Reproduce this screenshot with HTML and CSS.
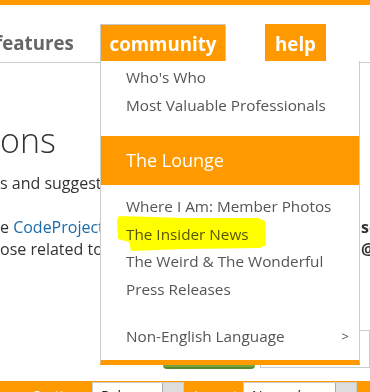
FILE: index.html
```html
<!DOCTYPE html>
<html>
<head>
<meta charset="utf-8">
<link rel="stylesheet" href="styles.css">
</head>
<body>
<div class="topbar"></div>
<nav class="nav">
  <span class="nav-item plain">features</span>
  <span class="nav-item tab active">community</span>
  <span class="nav-item tab help">help</span>
</nav>
<main class="page">
  <h1 class="title">ons</h1>
  <p class="intro">s and suggestions for the site and its features</p>
  <div class="para">
    <div class="line"><span class="head">e <a class="link">CodeProject</a> forums are open to all members</span><b class="tail">se</b></div>
    <div class="line"><span class="head">ose related to the site and its features</span><span class="tail">@</span></div>
  </div>
  <div class="actions">
    <span class="btn-green"></span>
    <span class="search">sa</span>
  </div>
</main>
<div class="sortbar">
  <span class="sort-label">Sorting</span>
  <span class="select s1"><span class="sel-text">Relevance</span><span class="sel-btn"></span></span>
  <span class="sort-label l2">Layout</span>
  <span class="select s2"><span class="sel-text">Normal</span><span class="sel-btn"></span></span>
</div>
<div class="dropdown">
  <ul class="menu first">
    <li>Who's Who</li>
    <li>Most Valuable Professionals</li>
  </ul>
  <div class="band">The Lounge</div>
  <ul class="menu second">
    <li>Where I Am: Member Photos</li>
    <li>The Insider News</li>
    <li>The Weird &amp; The Wonderful</li>
    <li>Press Releases</li>
    <li class="sub">Non-English Language <span class="arrow">&gt;</span></li>
  </ul>
</div>
<svg class="marker" width="154" height="40" viewBox="115 213 154 40">
  <polygon fill="#ffff00" points="119,216 185,218 258,218 265,221 266,245 260,248 185,249 131,251 129,242 118,239 117,220"/>
</svg>
</body>
</html>
```

FILE: styles.css
```css
html, body {
  margin: 0;
  padding: 0;
}
body {
  width: 370px;
  height: 392px;
  overflow: hidden;
  position: relative;
  background: #fff;
  font-family: "Open Sans", "Noto Sans", sans-serif;
  color: #333;
}
.topbar {
  height: 5px;
  background: #ff9900;
}
.nav {
  display: flex;
  align-items: flex-start;
  padding-top: 19px;
  padding-bottom: 1px;
  border-bottom: 1px solid #cccccc;
  height: 37px;
}
.nav-item {
  box-sizing: border-box;
  height: 37px;
  display: flex;
  align-items: center;
  font-weight: 700;
  font-size: 18.7px;
}
.plain {
  color: #666666;
  width: 105px;
  margin-left: -5px;
}
.tab {
  background: #ff9900;
  color: #fff;
  border: 1px solid #ff9900;
  border-bottom: 0;
  justify-content: center;
}
.active {
  width: 126px;
  border-color: #c8c8c8;
}
.help {
  width: 61px;
  margin-left: 39px;
}
.page {
  padding-top: 57px;
}
.title {
  margin: 0;
  font-size: 34px;
  line-height: 40px;
  font-weight: 300;
  color: #333;
}
.intro {
  margin: 12px 0 0;
  font-size: 16px;
  line-height: 22px;
  white-space: nowrap;
}
.para {
  margin-top: 22px;
  font-size: 16px;
  line-height: 22px;
}
.line {
  display: grid;
  grid-template-columns: 361px 1fr;
  white-space: nowrap;
}
.head {
  overflow: hidden;
}
.link {
  color: #1b6bab;
}
.tail {
  font-weight: 700;
}
.actions {
  display: flex;
  align-items: flex-start;
  padding-left: 163px;
  margin-top: 70px;
  gap: 5px;
}
.btn-green {
  display: block;
  width: 120px;
  height: 36px;
  margin-top: 3px;
  box-sizing: border-box;
  background: #72a83c;
  border-bottom: 2px solid #5a8a2d;
  border-radius: 4px;
}
.search {
  display: block;
  box-sizing: border-box;
  width: 120px;
  height: 38px;
  border: 1px solid #cccccc;
  padding-left: 73px;
  font-size: 16px;
  line-height: 36px;
  color: #bbbbbb;
}
.sortbar {
  margin-top: 12px;
  height: 30px;
  background: #ff9900;
  display: flex;
  align-items: flex-start;
  padding: 1px 0 0 33px;
  font-size: 14px;
}
.sort-label {
  color: #fff;
  width: 59px;
  line-height: 27px;
}
.l2 {
  width: 49px;
  margin-left: 10px;
}
.select {
  box-sizing: border-box;
  height: 30px;
  display: flex;
  background: #fffef8;
  border: 1px solid #cccccc;
  line-height: 26px;
  color: #222;
}
.s1 { width: 92px; }
.s2 { width: 114px; }
.sel-text {
  flex: 1;
  padding-left: 8px;
  overflow: hidden;
}
.sel-btn {
  width: 20px;
  background: #dddddd;
  border-left: 1px solid #aaaaaa;
}
.dropdown {
  position: absolute;
  left: 100px;
  top: 61px;
  width: 258px;
  height: 299px;
  background: #fff;
  border-left: 1px solid #cccccc;
  border-right: 1px solid #cccccc;
  border-bottom: 5px solid #ff9900;
}
.menu {
  list-style: none;
  margin: 0;
  padding: 0;
  font-size: 15.3px;
  line-height: 27.5px;
  color: #555555;
}
.menu li {
  padding-left: 25px;
  padding-right: 10px;
  white-space: nowrap;
}
.first {
  padding-top: 3px;
}
.band {
  margin-top: 17px;
  height: 49px;
  background: #ff9900;
  color: #fff;
  font-size: 18px;
  line-height: 49px;
  padding-left: 25px;
}
.second {
  padding-top: 8px;
}
.sub {
  margin-top: 20px;
  display: flex;
  justify-content: space-between;
}
.arrow {
  font-size: 13px;
}
.marker {
  position: absolute;
  left: 115px;
  top: 213px;
  mix-blend-mode: multiply;
}
```
